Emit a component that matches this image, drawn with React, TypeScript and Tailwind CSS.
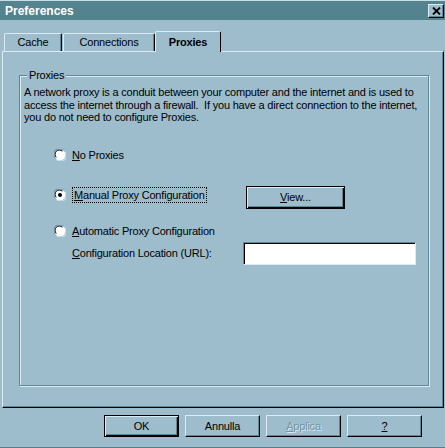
import React from 'react';

const raised =
  'border-t border-l border-t-[#dcebf3] border-l-[#dcebf3] border-r border-b border-r-black border-b-black shadow-[inset_-1px_-1px_0_#5d8898]';
const defaultBtn =
  'border border-black shadow-[inset_1px_1px_0_#dcebf3,inset_-1px_-1px_0_#000,inset_-2px_-2px_0_#5d8898]';

function Radio({ checked }: { checked?: boolean }) {
  return (
    <svg width="12" height="12" viewBox="0 0 12 12" className="shrink-0">
      <circle cx="6" cy="6" r="5.5" fill="#fff" />
      <path d="M1.2 9.2 A5.5 5.5 0 0 1 9.2 1.2" fill="none" stroke="#5d8898" strokeWidth="1" />
      <path d="M2.3 8.4 A4.3 4.3 0 0 1 8.4 2.3" fill="none" stroke="#000" strokeWidth="1" />
      <path d="M10.8 2.8 A5.5 5.5 0 0 1 2.8 10.8" fill="none" stroke="#dcebf3" strokeWidth="1" />
      {checked && <circle cx="6" cy="6" r="2" fill="#000" />}
    </svg>
  );
}

function Tab({ label, width, active }: { label: string; width: string; active?: boolean }) {
  return (
    <div
      className={
        active
          ? `relative z-10 -mb-px flex h-[21px] ${width} items-center justify-center rounded-t-[2px] border-t border-l border-[#dcebf3] border-r border-r-black bg-[#9dbccc] font-bold`
          : `flex h-[18px] ${width} items-center justify-center rounded-t-[2px] border-t border-l border-[#dcebf3] border-r border-r-black shadow-[inset_-1px_0_0_#5d8898]`
      }
    >
      {label}
    </div>
  );
}

export default function App() {
  return (
    <div className="flex h-[448px] w-[445px] flex-col border-t border-t-[#c9dde7] border-b border-b-[#52828f] bg-[#9dbccc] font-['Liberation_Sans',Arial,sans-serif] text-[11px] tracking-[-0.2px] text-black">
      {/* title bar */}
      <div className="flex h-[19px] items-center justify-between bg-[#53838f] pl-[5px] pr-[1px]">
        <span className="text-[12px] font-bold tracking-normal text-white">Preferences</span>
        <div className={`flex h-[14px] w-[16px] items-center justify-center bg-[#9dbccc] ${raised}`}>
          <svg width="9" height="8" viewBox="0 0 9 8">
            <path d="M1 0.5 L8 7.5 M8 0.5 L1 7.5" stroke="#000" strokeWidth="1.8" />
          </svg>
        </div>
      </div>

      {/* tabs */}
      <div className="mt-[11px] flex items-end pl-[4px]">
        <Tab label="Cache" width="w-[58px]" />
        <div className="ml-px">
          <Tab label="Connections" width="w-[92px]" />
        </div>
        <Tab label="Proxies" width="w-[66px]" active />
      </div>

      {/* tab pane */}
      <div className="ml-[2px] mr-[1px] flex h-[357px] flex-col border-t border-l border-[#dcebf3] border-r border-b border-r-black border-b-black shadow-[inset_-1px_-1px_0_#5d8898] pt-[17px] pl-[16px] pr-[14px]">
        <fieldset className="h-[317px] border border-[#5d8898] px-[4px] shadow-[inset_1px_1px_0_#dcebf3,1px_1px_0_#dcebf3]">
          <legend className="ml-[3px] bg-[#9dbccc] px-[2px] leading-[13px]">Proxies</legend>
          <p className="mt-[4px] leading-[12.5px]">
            A network proxy is a conduit between your computer and the internet and is used to access the
            internet through a firewall.&nbsp; If you have a direct connection to the internet, you do not need
            to configure Proxies.
          </p>

          <div className="mt-[25px] flex h-[13px] items-center gap-[6px] pl-[30px]">
            <Radio />
            <span>
              <u>N</u>o Proxies
            </span>
          </div>

          <div className="mt-[24px] flex items-start pl-[30px]">
            <div className="mt-[1px] flex w-[192px] items-center gap-[6px]">
              <Radio checked />
              <span className="border border-dotted border-black px-px leading-[14px]">
                <u>M</u>anual Proxy Configuration
              </span>
            </div>
            <button className={`h-[23px] w-[99px] bg-[#9dbccc] ${defaultBtn}`}>
              <u>V</u>iew...
            </button>
          </div>

          <div className="mt-[16px] flex h-[13px] items-center gap-[6px] pl-[30px]">
            <Radio checked={false} />
            <span>
              <u>A</u>utomatic Proxy Configuration
            </span>
          </div>

          <div className="mt-[4px] flex items-center pl-[48px]">
            <span className="w-[171px]">
              <u>C</u>onfiguration Location (URL):
            </span>
            <div className="h-[23px] w-[173px] border-t border-l border-[#5d8898] border-r border-b border-r-[#dcebf3] border-b-[#dcebf3] bg-white shadow-[inset_1px_1px_0_#000]" />
          </div>
        </fieldset>
      </div>

      {/* dialog buttons */}
      <div className="mt-[7px] flex justify-end gap-[6px] pr-[23px]">
        <button className={`h-[22px] w-[75px] bg-[#9dbccc] ${defaultBtn}`}>OK</button>
        <button className={`h-[22px] w-[75px] bg-[#9dbccc] ${raised}`}>Annulla</button>
        <button className={`h-[22px] w-[75px] bg-[#9dbccc] text-[#7096a6] [text-shadow:1px_1px_0_#dcebf3] ${raised}`}>
          <u>A</u>pplica
        </button>
        <button className={`h-[22px] w-[75px] bg-[#9dbccc] ${raised}`}>
          <u>?</u>
        </button>
      </div>
    </div>
  );
}
